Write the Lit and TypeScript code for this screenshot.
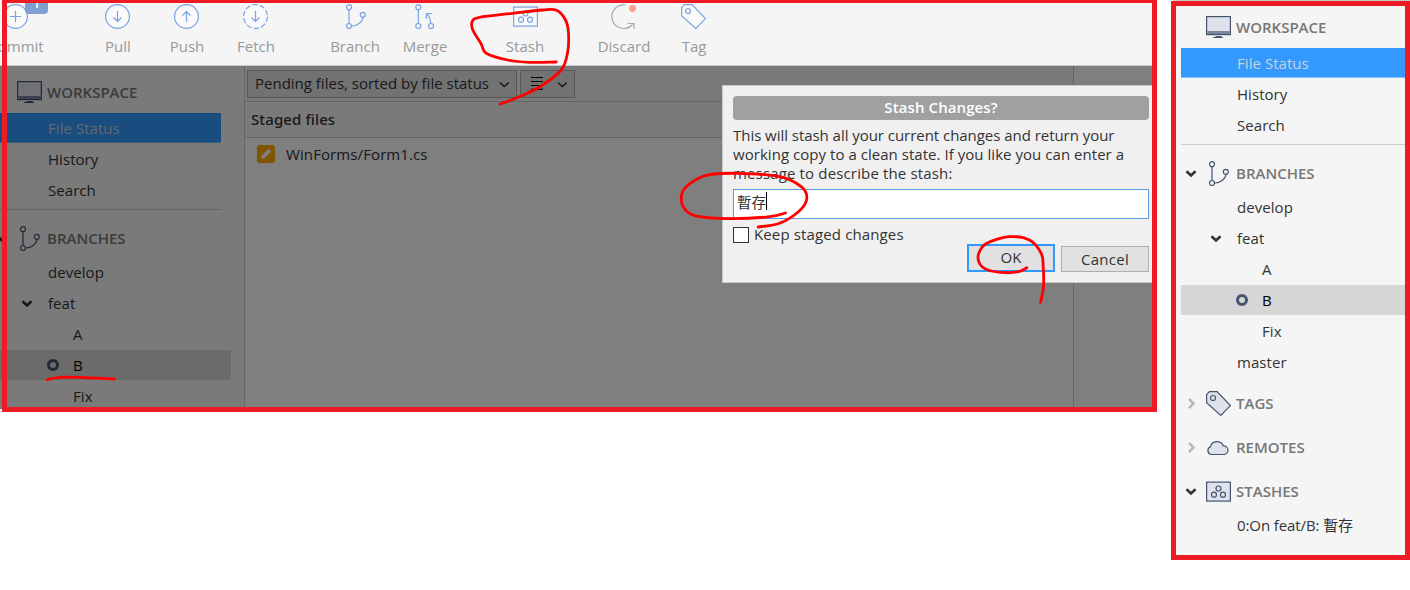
import { LitElement, html, svg, css } from "lit";
import { customElement } from "lit/decorators.js";

type Point = [number, number];

/** Smooths a list of points into one cubic path. */
function smooth(points: Point[]): string {
  const at = (i: number) => points[Math.max(0, Math.min(points.length - 1, i))];
  let d = `M${points[0][0]} ${points[0][1]}`;
  for (let i = 0; i < points.length - 1; i++) {
    const [p0, p1, p2, p3] = [at(i - 1), at(i), at(i + 1), at(i + 2)];
    d += ` C${p1[0] + (p2[0] - p0[0]) / 6} ${p1[1] + (p2[1] - p0[1]) / 6}`;
    d += ` ${p2[0] - (p3[0] - p1[0]) / 6} ${p2[1] - (p3[1] - p1[1]) / 6} ${p2[0]} ${p2[1]}`;
  }
  return d;
}

const branchShape = svg`<path d="M6 6v13M20.2 13.300c-1 4.500-5 8.500-11.400 8.700"/><circle cx="6" cy="3.200" r="2.500"/><circle cx="6" cy="22" r="2.500"/><circle cx="19.800" cy="10.800" r="2.500"/>`;
const stashShape = svg`<rect class="fill" x=".6" y="3.100" width="23.800" height="19"/><circle cx="12.500" cy="9.500" r="2.500"/><circle cx="8" cy="15.700" r="2.500"/><circle cx="17" cy="15.700" r="2.500"/>`;
const tagShape = svg`<path class="fill" d="M.6 3.600 3.400.6H11L24.400 14.600 14.800 24.400.6 11.800z"/><circle cx="7" cy="7" r="2.500"/>`;

const shapes: Record<string, unknown> = {
  commit: svg`<circle class="disc" cx="12.500" cy="12.500" r="11.900"/><path d="M12.500 7v11M7 12.500h11"/>`,
  pull: svg`<circle class="disc" cx="12.500" cy="12.500" r="11.900"/><path d="M12.500 7v10.500M8.500 13.500l4 4 4-4"/>`,
  push: svg`<circle class="disc" cx="12.500" cy="12.500" r="11.900"/><path d="M12.500 18V7.500M8.500 11.500l4-4 4 4"/>`,
  fetch: svg`<circle class="disc" cx="12.500" cy="12.500" r="11.900" stroke-dasharray="5.500 2"/><path d="M12.500 7v10.500M8.500 13.500l4 4 4-4"/>`,
  branch: branchShape,
  merge: svg`<path d="M6.300 6v13M18.700 19.300C18.400 15 17.500 12 14.800 9.600M14.500 15V9.500h5.300"/><circle cx="6.300" cy="3.200" r="2.500"/><circle cx="6.300" cy="22" r="2.500"/><circle cx="19" cy="22" r="2.500"/>`,
  stash: stashShape,
  discard: svg`<path d="M14.500 1A11.800 11.800 0 1 0 21.500 20.500M16.500 19.500h6.500v5.500"/><circle class="dot" cx="21.500" cy="4.500" r="3.400"/>`,
  tag: tagShape,
  workspace: svg`<rect class="fill" x=".6" y="1.600" width="23.800" height="18"/><path class="bar" d="M1.200 17.500h22.600"/><path d="M9.500 21.500h6M7 22.500h10"/>`,
  cloud: svg`<path class="fill" d="M5 19.500a4 4 0 0 1-.6-7.600 6.800 6.800 0 0 1 12.900-1 4.300 4.300 0 0 1 .8 8.600z"/>`,
  down: svg`<path class="chev" d="M8.500 10.200l4.500 4.300 4.500-4.300"/>`,
  right: svg`<path class="chev" d="M11 7.800l4.500 4.700-4.500 4.700"/>`,
  thin: svg`<path d="M8.800 10.500l4.500 4 4.500-4"/>`,
};

const icon = (name: string) => html`<svg class="icon ${name}" viewBox="0 0 25 25" width="25" height="25">${shapes[name]}</svg>`;

const fonts = css`
  :host { font-family: "Open Sans", "Noto Sans CJK TC", sans-serif; font-size: 15px; color: #333; }
  * { box-sizing: border-box; }
  .icon { display: block; flex: none; fill: none; stroke: currentColor; stroke-width: 1.200; overflow: visible; }
`;

@customElement("side-tree")
class SideTree extends LitElement {
  static styles = [fonts, css`
    :host { display: block; width: 239px; }
    .head { display: flex; align-items: center; height: 44px; padding: 6px 0 0; font-weight: 600; color: #777; line-height: 20px; }
    .head.first { height: 42px; padding: 0; }
    .head span { margin-top: -1px; }
    .toggle { width: 25px; margin-left: -3px; color: #333; }
    .toggle.shut { color: #b8b8b8; }
    .glyph { width: 33px; padding-left: 3px; color: #44546f; }
    .row { display: flex; align-items: center; height: 31px; padding: 0 0 1px 56px; letter-spacing: 0.05px; }
    .row.deep { padding-left: 81px; }
    .row.open { padding-left: 22px; }
    .row.open .icon { margin: 1px 9px 0 0; color: #333; }
    .row.current { height: 30px; margin-bottom: 1px; padding-left: 55px; background: #d6d6d6; color: #000; }
    .ring { width: 12px; height: 12px; margin-right: 14px; border: 3px solid #44546f; border-radius: 50%; }
    .row.active { width: 229px; height: 30px; margin-bottom: 1px; padding-bottom: 0; background: #39f; color: #c9d2dc; border-bottom: 1px solid #80bfff; }
    .row.entry { padding-bottom: 3px; letter-spacing: -0.1px; }
    .rule { width: 230px; height: 1px; margin: 3px 0; background: #ccc; }
    .fill { fill: #dfe2ea; }
    .workspace .bar { stroke-width: 3; stroke: #7a869a; }
    .chev { stroke-width: 2.600; }
  `];

  head(label: string, name: string, state: string) {
    return html`<div class="head ${state ? "" : "first"}">
      <div class="toggle ${state === "right" ? "shut" : ""}">${state ? icon(state) : ""}</div>
      <div class="glyph">${icon(name)}</div><span>${label}</span></div>`;
  }

  render() {
    return html`
      ${this.head("WORKSPACE", "workspace", "")}
      <div class="row active">File Status</div>
      <div class="row">History</div>
      <div class="row">Search</div>
      <div class="rule"></div>
      ${this.head("BRANCHES", "branch", "down")}
      <div class="row">develop</div>
      <div class="row open">${icon("down")}feat</div>
      <div class="row deep">A</div>
      <div class="row current"><span class="ring"></span>B</div>
      <div class="row deep">Fix</div>
      <div class="row">master</div>
      ${this.head("TAGS", "tag", "right")}
      ${this.head("REMOTES", "cloud", "right")}
      ${this.head("STASHES", "stash", "down")}
      <div class="row entry">0:On feat/B: 暫存</div>`;
  }
}

@customElement("stash-dialog")
class StashDialog extends LitElement {
  static styles = [fonts, css`
    :host { display: block; width: 436px; height: 198px; padding: 10px; border: 1px solid #c8c8c8; background: #f0f0f0; }
    .body { width: 416px; }
    .title { height: 24px; border-radius: 4px; background: #a0a0a0; color: #fff; font-weight: 600; text-align: center; line-height: 23px; letter-spacing: 0.1px; }
    .copy { margin: 6px 0; line-height: 19px; white-space: nowrap; letter-spacing: -0.04px; }
    .copy .second { letter-spacing: 0.04px; }
    .copy .third { letter-spacing: 0.15px; }
    .input { display: flex; align-items: center; height: 30px; padding: 0 3px 6px; border: 1px solid #569de5; background: #fff; font-size: 14.500px; }
    .caret { width: 1px; height: 18px; background: #000; }
    .keep { display: flex; align-items: center; gap: 5px; height: 16px; margin-top: 8px; line-height: 14px; letter-spacing: 0.13px; }
    .keep span:last-child { margin-top: -2px; }
    .box { width: 16px; height: 16px; border: 1px solid #333; background: #fff; }
    .actions { display: flex; justify-content: flex-end; align-items: flex-end; gap: 6px; margin-top: 1px; }
    .button { width: 88px; height: 26px; border: 1px solid #adadad; background: #e1e1e1; line-height: 25px; text-align: center; letter-spacing: 0.3px; }
    .button.primary { height: 28px; border: 2px solid #39f; line-height: 23px; letter-spacing: 0; }
  `];

  render() {
    return html`<div class="body">
      <div class="title">Stash Changes?</div>
      <div class="copy">This will stash all your current changes and return your<br><span class="second">working copy to a clean state. If you like you can enter a</span><br><span class="third">message to describe the stash:</span></div>
      <div class="input">暫存<span class="caret"></span></div>
      <div class="keep"><span class="box"></span><span>Keep staged changes</span></div>
      <div class="actions"><div class="button primary">OK</div><div class="button">Cancel</div></div>
    </div>`;
  }
}

const tools: [string, string][] = [
  ["commit", "Commit"], ["pull", "Pull"], ["push", "Push"], ["fetch", "Fetch"], ["branch", "Branch"],
  ["merge", "Merge"], ["stash", "Stash"], ["discard", "Discard"], ["tag", "Tag"],
];

const strokes: Point[][] = [
  [[556.7, 62], [530, 62.3], [508, 60], [486.7, 53.3], [481.7, 44], [473.3, 30], [472.7, 21.7], [480, 17.3], [513, 13.3], [543, 10], [557, 10.3], [566, 20], [569, 33], [568, 53], [561.7, 70], [540, 87], [520, 96.7], [500.7, 104]],
  [[786, 213], [770, 216.7], [733, 218.7], [700, 216.7], [686.7, 210.7], [681.7, 198.3], [686.7, 186.7], [706.7, 175.3], [736.7, 173.3], [780, 176.7], [801.7, 186.7], [807.3, 198.3], [800, 210.7], [780, 223.3], [758.7, 227]],
  [[1027.3, 267.7], [1020, 271.3], [1006.7, 272.7], [988.3, 270], [980, 263.3], [979.3, 253.3], [987.3, 243.3], [1010, 236.7], [1030, 240], [1041.7, 253.3], [1043.7, 266.7], [1044, 286.7], [1041, 302.3]],
  [[47.7, 379.7], [60, 377.3], [80, 377.3], [115, 379]],
];

@customElement("app-root")
class AppRoot extends LitElement {
  static styles = [fonts, css`
    :host { display: block; position: relative; width: 1410px; height: 590px; background: #fff; overflow: hidden; }
    .page { display: flex; align-items: flex-start; gap: 16px; }
    .window { position: relative; width: 1155px; height: 409px; background: #f5f5f5; overflow: hidden; }
    .tools { display: grid; grid-template-columns: 102px 69px 69px 99px 70px 100px 99px 70px 70px; height: 66px; margin-left: -19px; padding-top: 4px; border-bottom: 1px solid #c8c8c8; align-items: start; }
    .tool { display: flex; flex-direction: column; align-items: center; width: 70px; color: #999; line-height: 20px; gap: 7px; }
    .tool .icon { margin-right: 1px; color: #79a3e2; }
    .tool .branch, .tool .stash { margin-right: 0; }
    .tool .discard { color: #a3a9b5; }
    .tool .fill, .disc { fill: #fafafa; }
    .dot { fill: #ff9f8f; stroke: none; }
    .badge { position: absolute; left: 25px; top: -6px; width: 23px; height: 20px; border-radius: 4px; background: #7f9fd3; color: #fff; font-size: 13px; font-weight: 600; line-height: 18px; text-align: center; }
    .work { display: grid; grid-template-columns: 245px 829px 1fr; height: 343px; }
    .side { overflow: hidden; border-right: 1px solid #ccc; padding-top: 5px; }
    .side side-tree { margin-left: -8px; }
    .files { background: #fff; border-right: 1px solid #ccc; }
    .filter { display: flex; gap: 3px; height: 36px; padding: 4px 2px; background: #f5f5f5; border-bottom: 1px solid #ccc; }
    .combo { display: flex; align-items: center; justify-content: space-between; width: 270px; height: 28px; padding-left: 7px; border: 1px solid #b0b0b0; background: #e5e5e5; line-height: 20px; }
    .combo span { margin-top: -2px; }
    .combo.small { width: 55px; padding-left: 10px; }
    .combo .thin { stroke-width: 1.600; }
    .lines { display: block; margin-top: -2px; stroke: #000; stroke-width: 1.200; }
    .staged { height: 36px; padding-left: 6px; line-height: 35px; background: #f5f5f5; border-bottom: 1px solid #ccc; font-family: "Noto Sans", "Open Sans", sans-serif; font-weight: 500; letter-spacing: 0.100px; }
    .file { display: flex; align-items: center; gap: 11px; height: 32px; padding-left: 12px; letter-spacing: 0.1px; }
    .rest { background: #fff; }
    .shade { position: absolute; inset: 66px 0 0; background: rgba(0, 0, 0, .5); }
    stash-dialog { position: absolute; left: 722px; top: 85px; }
    .result { width: 239px; height: 559px; margin-top: 1px; padding: 0 0 0 5px; border: 5px solid #ed1c24; background: #f5f5f5; overflow: hidden; }
    .ink { position: absolute; inset: 0; fill: none; stroke: #f00; stroke-width: 2.800; stroke-linecap: round; stroke-linejoin: round; }
    .frame { position: absolute; left: 2px; top: -2px; width: 1155px; height: 414px; border: 5px solid #ed1c24; }
    .edge { position: absolute; left: 1173px; top: 0; width: 237px; height: 1px; background: #c8c8c8; }
  `];

  render() {
    return html`
      <div class="page">
        <div class="window">
          <div class="tools">${tools.map(([name, label]) => html`<div class="tool">${icon(name)}<span>${label}</span></div>`)}</div>
          <div class="badge">1</div>
          <div class="work">
            <div class="side"><side-tree></side-tree></div>
            <div class="files">
              <div class="filter">
                <div class="combo"><span>Pending files, sorted by file status</span>${icon("thin")}</div>
                <div class="combo small"><svg class="lines" width="12" height="14"><path d="M0 1.500h12M0 5.500h12M0 9.500h12M0 13.300h12"/></svg>${icon("thin")}</div>
              </div>
              <div class="staged">Staged files</div>
              <div class="file"><svg width="18" height="18" viewBox="0 0 18 18"><rect width="18" height="18" rx="2.500" fill="#ffab00"/><path d="M4 14l.8-3.500 6.700-6.700 2.700 2.700-6.700 6.700z" fill="#fff"/></svg>WinForms/Form1.cs</div>
            </div>
            <div class="rest"></div>
          </div>
          <div class="shade"></div>
          <stash-dialog></stash-dialog>
        </div>
        <div class="result"><side-tree></side-tree></div>
      </div>
      <div class="edge"></div>
      <svg class="ink" width="1409" height="590" viewBox="0.5 0 1409 590">${strokes.map((s) => svg`<path d=${smooth(s)}/>`)}</svg>
      <div class="frame"></div>`;
  }
}
